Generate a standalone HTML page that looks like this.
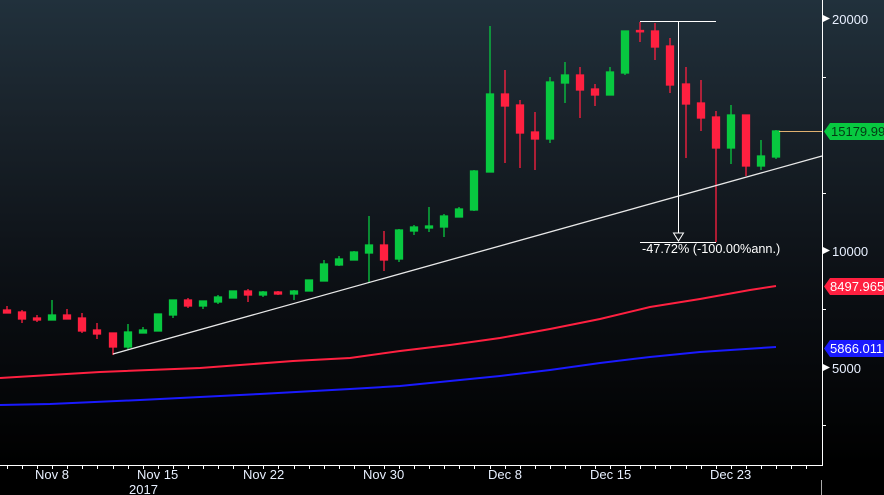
<!DOCTYPE html>
<html><head><meta charset="utf-8"><style>
html,body{margin:0;padding:0;background:#000;}
svg{display:block;}
text{font-family:"Liberation Sans",sans-serif;font-size:13px;}
</style></head><body>
<svg width="884" height="495" viewBox="0 0 884 495" xmlns="http://www.w3.org/2000/svg">
<defs><linearGradient id="bg" x1="0" y1="0" x2="0" y2="1">
<stop offset="0" stop-color="#21313c"/><stop offset="0.26" stop-color="#19222a"/><stop offset="0.6" stop-color="#0c1015"/><stop offset="1" stop-color="#000"/></linearGradient></defs>
<rect x="0" y="0" width="884" height="465" fill="url(#bg)"/>
<rect x="0" y="465" width="884" height="30" fill="#000"/>
<g id="c" stroke-width="1.3">
<g stroke="#ff2040" fill="#ff2040">
<line x1="7" y1="306" x2="7" y2="313"/><rect x="3.5" y="310" width="7" height="3"/>
<line x1="22" y1="310" x2="22" y2="323"/><rect x="18.5" y="312" width="7" height="7"/>
<line x1="37" y1="315" x2="37" y2="322"/><rect x="33.5" y="318" width="7" height="2"/>
<line x1="67" y1="309" x2="67" y2="319"/><rect x="63.5" y="315" width="7" height="4"/>
<line x1="82" y1="313" x2="82" y2="333"/><rect x="78.5" y="318" width="7" height="13"/>
<line x1="97" y1="323" x2="97" y2="339"/><rect x="93.5" y="330" width="7" height="4"/>
<line x1="113" y1="333" x2="113" y2="355"/><rect x="109.5" y="333" width="7" height="14"/>
<line x1="188" y1="298" x2="188" y2="308"/><rect x="184.5" y="300" width="7" height="6"/>
<line x1="248" y1="289" x2="248" y2="302"/><rect x="244.5" y="291" width="7" height="4"/>
<line x1="278" y1="291" x2="278" y2="295"/><rect x="274.5" y="292" width="7" height="2"/>
<line x1="384" y1="231" x2="384" y2="271"/><rect x="380.5" y="245" width="7" height="15"/>
<line x1="505" y1="70" x2="505" y2="163"/><rect x="501.5" y="94" width="7" height="12"/>
<line x1="520" y1="100" x2="520" y2="168"/><rect x="516.5" y="105" width="7" height="28"/>
<line x1="535" y1="112" x2="535" y2="170"/><rect x="531.5" y="132" width="7" height="7"/>
<line x1="580" y1="67" x2="580" y2="118"/><rect x="576.5" y="75" width="7" height="15"/>
<line x1="595" y1="84" x2="595" y2="106"/><rect x="591.5" y="89" width="7" height="6"/>
<line x1="640" y1="22" x2="640" y2="42"/><rect x="636.5" y="30.5" width="7" height="1.3"/>
<line x1="655" y1="23" x2="655" y2="60"/><rect x="651.5" y="31" width="7" height="16"/>
<line x1="670" y1="38" x2="670" y2="93"/><rect x="666.5" y="46" width="7" height="39"/>
<line x1="686" y1="67" x2="686" y2="158"/><rect x="682.5" y="84" width="7" height="20"/>
<line x1="701" y1="80" x2="701" y2="131"/><rect x="697.5" y="103" width="7" height="15"/>
<line x1="716" y1="111" x2="716" y2="242"/><rect x="712.5" y="117" width="7" height="31"/>
<line x1="746" y1="115" x2="746" y2="176"/><rect x="742.5" y="115" width="7" height="51"/>
</g>
<g stroke="#08c840" fill="#08c840">
<line x1="52" y1="300" x2="52" y2="320"/><rect x="48.5" y="315" width="7" height="5"/>
<line x1="128" y1="324" x2="128" y2="350"/><rect x="124.5" y="332" width="7" height="15"/>
<line x1="143" y1="327" x2="143" y2="333"/><rect x="139.5" y="330" width="7" height="3"/>
<line x1="158" y1="314" x2="158" y2="331"/><rect x="154.5" y="314" width="7" height="17"/>
<line x1="173" y1="300" x2="173" y2="318"/><rect x="169.5" y="300" width="7" height="15"/>
<line x1="203" y1="301" x2="203" y2="309"/><rect x="199.5" y="301" width="7" height="5"/>
<line x1="218" y1="295" x2="218" y2="304"/><rect x="214.5" y="297" width="7" height="5"/>
<rect x="229.5" y="291" width="7" height="7"/>
<line x1="263" y1="291" x2="263" y2="297"/><rect x="259.5" y="292" width="7" height="3"/>
<line x1="294" y1="290" x2="294" y2="300"/><rect x="290.5" y="291" width="7" height="3"/>
<rect x="305.5" y="280" width="7" height="11"/>
<line x1="324" y1="260" x2="324" y2="281"/><rect x="320.5" y="264" width="7" height="17"/>
<line x1="339" y1="256" x2="339" y2="266"/><rect x="335.5" y="259" width="7" height="6"/>
<line x1="354" y1="251" x2="354" y2="260"/><rect x="350.5" y="252" width="7" height="8"/>
<line x1="369" y1="216" x2="369" y2="283"/><rect x="365.5" y="245" width="7" height="8"/>
<line x1="399" y1="229" x2="399" y2="262"/><rect x="395.5" y="230" width="7" height="29"/>
<line x1="414" y1="225" x2="414" y2="235"/><rect x="410.5" y="227" width="7" height="4"/>
<line x1="429" y1="207" x2="429" y2="232"/><rect x="425.5" y="226" width="7" height="2"/>
<line x1="444" y1="214" x2="444" y2="237"/><rect x="440.5" y="216" width="7" height="11"/>
<line x1="459" y1="207" x2="459" y2="217"/><rect x="455.5" y="209" width="7" height="8"/>
<line x1="474" y1="170" x2="474" y2="211"/><rect x="470.5" y="171" width="7" height="39"/>
<line x1="490" y1="26" x2="490" y2="172"/><rect x="486.5" y="94" width="7" height="78"/>
<line x1="550" y1="77" x2="550" y2="143"/><rect x="546.5" y="82" width="7" height="57"/>
<line x1="565" y1="62" x2="565" y2="103"/><rect x="561.5" y="75" width="7" height="8"/>
<line x1="610" y1="67" x2="610" y2="95"/><rect x="606.5" y="72" width="7" height="23"/>
<line x1="625" y1="31" x2="625" y2="75"/><rect x="621.5" y="31" width="7" height="42"/>
<line x1="731" y1="105" x2="731" y2="164"/><rect x="727.5" y="115" width="7" height="33"/>
<line x1="761" y1="140" x2="761" y2="170"/><rect x="757.5" y="156" width="7" height="10"/>
<line x1="776" y1="130" x2="776" y2="159"/><rect x="772.5" y="131" width="7" height="26"/>
</g></g>
<polyline fill="none" stroke="#ff2040" stroke-width="2" points="0,378 100,372 200,368 293,361 350,358 400,351 450,345 500,338 550,329 600,319 650,307 700,299 750,290 776,286"/>
<polyline fill="none" stroke="#1a1aff" stroke-width="2" points="0,405 50,404 140,400 260,394 350,389 400,386 450,381 500,376 550,370 600,363 650,357 700,352 776,347"/>
<line x1="113" y1="354" x2="822" y2="156" stroke="#e8e8e8" stroke-width="1.3"/>
<g stroke="#fff" stroke-width="1" fill="none">
<line x1="640" y1="21.5" x2="716" y2="21.5"/>
<line x1="678.5" y1="21" x2="678.5" y2="233"/>
<path d="M673.5 233 L683.5 233 L678.5 241 Z"/>
<line x1="640" y1="242.5" x2="716" y2="242.5"/>
</g>
<text x="642" y="253" fill="#fff" style="font-size:12.7px">-47.72% (-100.00%ann.)</text>
<line x1="779" y1="131.5" x2="822" y2="131.5" stroke="#e0b070" stroke-width="1"/>
<line x1="822.5" y1="0" x2="822.5" y2="466" stroke="#fff" stroke-width="1"/>
<line x1="0" y1="465.5" x2="823" y2="465.5" stroke="#fff" stroke-width="1"/>
<line x1="821.5" y1="480" x2="821.5" y2="495" stroke="#aaa" stroke-width="1"/>
<g stroke="#fff" stroke-width="1">
<path d="M7.5 465v4M22.5 465v4M37.5 465v4M52.5 465v4M67.5 465v4M82.5 465v4M97.5 465v4M113.5 465v4M128.5 465v4M143.5 465v4M158.5 465v4M173.5 465v4M188.5 465v4M203.5 465v4M218.5 465v4M233.5 465v4M248.5 465v4M263.5 465v4M278.5 465v4M294.5 465v4M309.5 465v4M324.5 465v4M339.5 465v4M354.5 465v4M369.5 465v4M384.5 465v4M399.5 465v4M414.5 465v4M429.5 465v4M444.5 465v4M459.5 465v4M474.5 465v4M490.5 465v4M505.5 465v4M520.5 465v4M535.5 465v4M550.5 465v4M565.5 465v4M580.5 465v4M595.5 465v4M610.5 465v4M625.5 465v4M640.5 465v4M655.5 465v4M670.5 465v4M686.5 465v4M701.5 465v4M716.5 465v4M731.5 465v4M746.5 465v4M761.5 465v4M776.5 465v4M791.5 465v4M806.5 465v4"/>
<path d="M822 77.5h4M822 193.5h4M822 309.5h4M822 425.5h4"/>
</g>
<g fill="#fff">
<path d="M823 15 L830 18.5 L823 22Z"/><path d="M823 247 L830 250.5 L823 254Z"/><path d="M823 364 L830 367.5 L823 371Z"/>
</g>
<g fill="#e8f0ff">
<text x="832" y="24">20000</text>
<text x="832" y="256">10000</text>
<text x="832" y="373">5000</text>
</g>
<path d="M830 123 L884 123 L884 140 L830 140 L824 131.5Z" fill="#08c840"/>
<text x="831" y="136" style="fill:#043a14">15179.99</text>
<path d="M830 278 L884 278 L884 295 L830 295 L824 286.5Z" fill="#ff2040"/>
<text x="830" y="291" fill="#fff">8497.965</text>
<path d="M830 340 L884 340 L884 357 L830 357 L824 348.5Z" fill="#1a1aff"/>
<text x="830" y="353" fill="#fff">5866.011</text>
<g fill="#e8f0ff">
<text x="35" y="479">Nov 8</text>
<text x="137" y="479">Nov 15</text>
<text x="243" y="479">Nov 22</text>
<text x="363" y="479">Nov 30</text>
<text x="488" y="479">Dec 8</text>
<text x="590" y="479">Dec 15</text>
<text x="710" y="479">Dec 23</text>
<text x="129" y="494">2017</text>
</g>
</svg>
</body></html>
